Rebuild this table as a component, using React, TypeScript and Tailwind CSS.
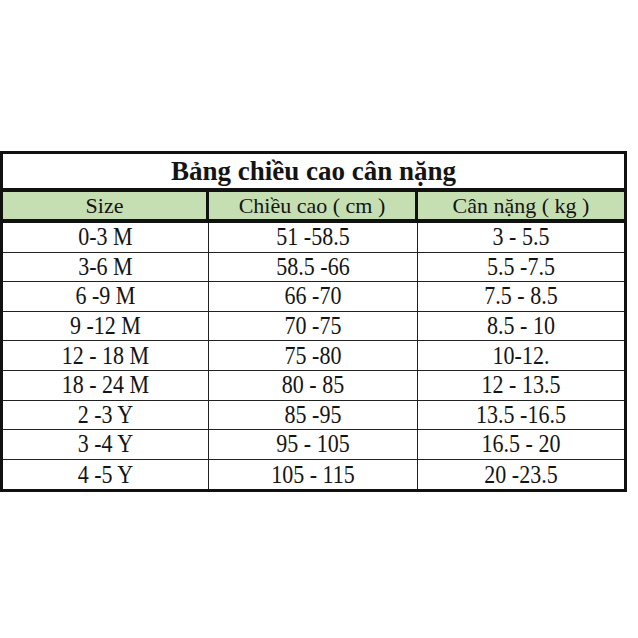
const rows = [
  ["0-3 M", "51 -58.5", "3 - 5.5"],
  ["3-6 M", "58.5 -66", "5.5 -7.5"],
  ["6 -9 M", "66 -70", "7.5 - 8.5"],
  ["9 -12 M", "70 -75", "8.5 - 10"],
  ["12 - 18 M", "75 -80", "10-12."],
  ["18 - 24 M", "80 - 85", "12 - 13.5"],
  ["2 -3 Y", "85 -95", "13.5 -16.5"],
  ["3 -4 Y", "95 - 105", "16.5 - 20"],
  ["4 -5 Y", "105 - 115", "20 -23.5"],
]

export default function App() {
  return (
    <div className="w-[638px] h-[638px] bg-white pt-[151px] text-[#141414] font-['Liberation_Serif','Times_New_Roman',serif]">
      <div className="w-[627px] border-[3px] border-[#111]">
        <div className="h-[38px] border-b-4 border-[#111] flex items-center justify-center text-[27px] font-bold leading-none">
          Bảng chiều cao cân nặng
        </div>
        <div className="h-[31px] border-b-4 border-[#111] bg-[#c5dfb3] grid grid-cols-[206px_209px_1fr] text-[22px] leading-none">
          <div className="flex items-center justify-center border-r-[3px] border-[#111]">Size</div>
          <div className="flex items-center justify-center border-r-[3px] border-[#111]">Chiều cao ( cm )</div>
          <div className="flex items-center justify-center">Cân nặng ( kg )</div>
        </div>
        {rows.map((r, i) => (
          <div
            key={i}
            className={`h-[29.6px] grid grid-cols-[206px_209px_1fr] text-[22px] leading-none ${
              i < rows.length - 1 ? "border-b-[1.5px] border-[#222]" : ""
            }`}
          >
            <div className="flex items-center justify-center border-r-[1.5px] border-[#222]">
              <span className="scale-y-110">{r[0]}</span>
            </div>
            <div className="flex items-center justify-center border-r-[1.5px] border-[#222]">
              <span className="scale-y-110">{r[1]}</span>
            </div>
            <div className="flex items-center justify-center">
              <span className="scale-y-110">{r[2]}</span>
            </div>
          </div>
        ))}
      </div>
    </div>
  )
}
